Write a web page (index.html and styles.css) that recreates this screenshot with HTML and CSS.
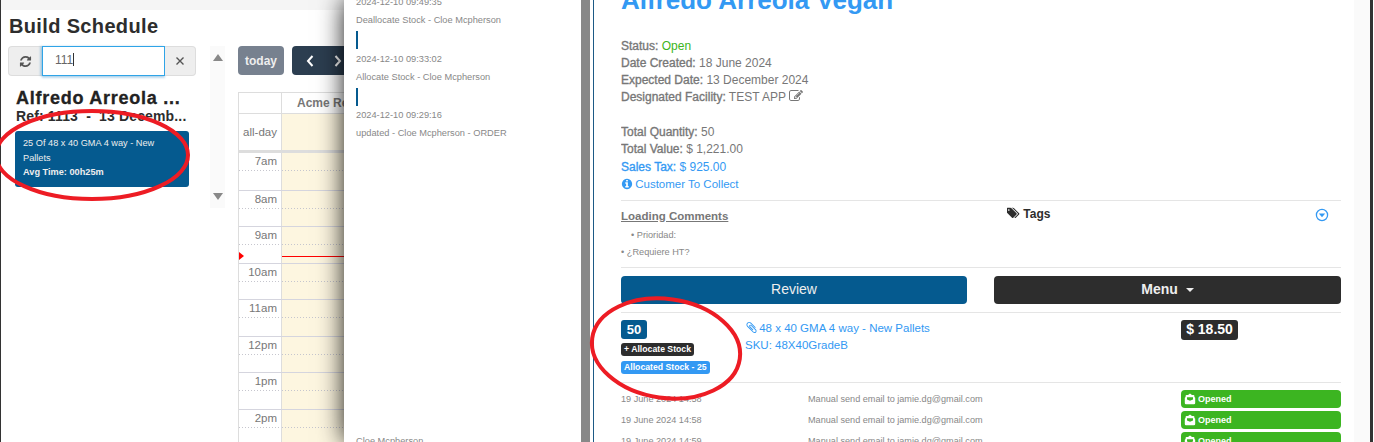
FILE: index.html
```html
<!DOCTYPE html>
<html lang="en">
<head>
  <meta charset="UTF-8">
  <title>Build Schedule</title>
  <link rel="stylesheet" href="styles.css">
</head>
<body>
  <div class="schedule-page">
    <div class="top-strip"></div>
    <h1 class="page-title">Build Schedule</h1>
    <div class="schedule-body">
      <aside class="sidebar">
        <div class="search-group">
          <button class="search-btn refresh-btn">
            <svg class="icon-refresh" viewBox="0 0 1792 1792"><path d="M1639 1056q0 5-1 7-64 268-268 434.5t-478 166.5q-146 0-282.5-55t-243.5-157l-129 129q-19 19-45 19t-45-19-19-45v-448q0-26 19-45t45-19h448q26 0 45 19t19 45-19 45l-137 137q71 66 161 102t187 36q134 0 250-65t186-179q11-17 53-117 8-23 30-23h192q13 0 22.5 9.5t9.5 22.5zm25-800v448q0 26-19 45t-45 19h-448q-26 0-45-19t-19-45 19-45l138-138q-148-137-349-137-134 0-250 65t-186 179q-11 17-53 117-8 23-30 23h-199q-13 0-22.5-9.5t-9.5-22.5v-7q65-268 270-434.5t480-166.5q146 0 284 55.5t245 156.5l130-129q19-19 45-19t45 19 19 45z"/></svg>
          </button>
          <div class="search-input">111<span class="caret-bar"></span></div>
          <button class="search-btn clear-btn">
            <svg class="icon-times" viewBox="0 0 10 10"><path d="M1.5 1.5l7 7M8.5 1.5l-7 7"/></svg>
          </button>
        </div>
        <div class="order-name">Alfredo Arreola ...</div>
        <div class="order-ref">Ref: 1113 &nbsp;-&nbsp; 13 Decemb...</div>
        <div class="build-card">
          <div>25 Of 48 x 40 GMA 4 way - New Pallets</div>
          <div class="build-time">Avg Time: 00h25m</div>
        </div>
      </aside>
      <div class="scroll-col">
        <span class="arrow-up"></span>
        <span class="arrow-down"></span>
      </div>
      <section class="calendar">
        <div class="cal-toolbar">
          <button class="today-btn">today</button>
          <div class="nav-btns">
            <svg class="chevron" viewBox="0 0 10 14"><path d="M7.5 2L3 7l4.5 5"/></svg>
            <svg class="chevron" viewBox="0 0 10 14"><path d="M2.5 2L7 7l-4.5 5"/></svg>
          </div>
        </div>
        <div class="cal-grid">
          <div class="cal-head">
            <div class="axis"></div>
            <div class="resource">Acme Recycling</div>
          </div>
          <div class="cal-allday">
            <div class="axis">all-day</div>
            <div class="day"></div>
          </div>
          <div class="cal-slots">
            <div class="hour"><div class="axis">7am</div><div class="day"></div></div>
            <div class="hour"><div class="axis">8am</div><div class="day"></div></div>
            <div class="hour"><div class="axis">9am</div><div class="day"></div></div>
            <div class="hour"><div class="axis">10am</div><div class="day"></div></div>
            <div class="hour"><div class="axis">11am</div><div class="day"></div></div>
            <div class="hour"><div class="axis">12pm</div><div class="day"></div></div>
            <div class="hour"><div class="axis">1pm</div><div class="day"></div></div>
            <div class="hour"><div class="axis">2pm</div><div class="day"></div></div>
            <span class="now-arrow"></span>
            <span class="now-line"></span>
          </div>
        </div>
      </section>
    </div>
  </div>

  <div class="overlay">
    <div class="history">
      <div class="history-item">
        <div>2024-12-10 09:49:35</div>
        <div>Deallocate Stock - Cloe Mcpherson</div>
        <span class="tick"></span>
      </div>
      <div class="history-item">
        <div>2024-12-10 09:33:02</div>
        <div>Allocate Stock - Cloe Mcpherson</div>
        <span class="tick"></span>
      </div>
      <div class="history-item">
        <div>2024-12-10 09:29:16</div>
        <div>updated - Cloe Mcpherson - ORDER</div>
      </div>
      <div class="history-foot">Cloe Mcpherson</div>
    </div>
    <div class="grey-strip"></div>

    <div class="order-panel">
      <div class="order-content">
        <h2 class="customer">Alfredo Arreola Vegan</h2>
        <div class="info-block">
          <div><b>Status:</b> <span class="green">Open</span></div>
          <div><b>Date Created:</b> 18 June 2024</div>
          <div><b>Expected Date:</b> 13 December 2024</div>
          <div><b>Designated Facility:</b> TEST APP
            <svg class="icon-edit" viewBox="0 0 1792 1792"><path d="M888 1184l116-116-152-152-116 116v56h96v96h56zm440-720q-16-16-33 1l-350 350q-17 17-1 33t33-1l350-350q17-17 1-33zm80 594v190q0 119-84.5 203.5t-203.5 84.5h-832q-119 0-203.5-84.5t-84.5-203.5v-832q0-119 84.5-203.5t203.5-84.5h832q63 0 117 25 15 7 18 23 3 17-9 29l-49 49q-14 14-32 8-23-6-45-6h-832q-66 0-113 47t-47 113v832q0 66 47 113t113 47h832q66 0 113-47t47-113v-126q0-13 9-22l64-64q15-15 35-7t20 29zm-96-738l288 288-672 672h-288v-288zm444 132l-92 92-288-288 92-92q28-28 68-28t68 28l152 152q28 28 28 68t-28 68z"/></svg>
          </div>
        </div>
        <div class="info-block totals">
          <div><b>Total Quantity:</b> 50</div>
          <div><b>Total Value:</b> $ 1,221.00</div>
          <div class="blue sales-tax"><b>Sales Tax:</b> $ 925.00</div>
          <div class="blue collect">
            <svg class="icon-info" viewBox="0 0 1792 1792"><path d="M1152 1376v-160q0-14-9-23t-23-9h-96v-512q0-14-9-23t-23-9h-320q-14 0-23 9t-9 23v160q0 14 9 23t23 9h96v320h-96q-14 0-23 9t-9 23v160q0 14 9 23t23 9h448q14 0 23-9t9-23zm-128-896v-160q0-14-9-23t-23-9h-192q-14 0-23 9t-9 23v160q0 14 9 23t23 9h192q14 0 23-9t9-23zm640 416q0 209-103 385.5t-279.5 279.5-385.5 103-385.5-103-279.5-279.5-103-385.5 103-385.5 279.5-279.5 385.5-103 385.5 103 279.5 279.5 103 385.5z"/></svg>
            Customer To Collect
          </div>
        </div>

        <div class="comments-row">
          <div class="comments">
            <div class="comments-title">Loading Comments</div>
            <div class="comment-line indent">&bull; Prioridad:</div>
            <div class="comment-line">&bull; ¿Requiere HT?</div>
          </div>
          <div class="tags">
            <svg class="icon-tags" viewBox="0 0 1920 1792"><path d="M384 448q0-53-37.5-90.5t-90.5-37.5-90.5 37.5-37.5 90.5 37.5 90.5 90.5 37.5 90.5-37.5 37.5-90.5zm1067 576q0 53-37 90l-491 492q-39 37-91 37-53 0-90-37l-715-716q-38-37-64.5-101t-26.5-117v-416q0-52 38-90t90-38h416q53 0 117 26.5t102 64.5l715 714q37 39 37 91zm384 0q0 53-37 90l-491 492q-39 37-91 37-36 0-59-14t-53-45l470-470q37-37 37-90 0-52-37-91l-715-714q-38-38-102-64.5t-117-26.5h224q53 0 117 26.5t102 64.5l715 714q37 39 37 91z"/></svg>
            Tags
          </div>
          <svg class="icon-collapse" viewBox="0 0 14 14"><circle cx="7" cy="7" r="5.6"/><path class="fill" d="M3.8 5.6h6.4L7 9.2z"/></svg>
        </div>

        <div class="action-row">
          <button class="action-btn review">Review</button>
          <button class="action-btn menu">Menu <span class="menu-caret"></span></button>
        </div>

        <div class="item-row">
          <div class="item-qty">
            <span class="qty-badge">50</span>
            <span class="mini-badge dark">+ Allocate Stock</span>
            <span class="mini-badge light">Allocated Stock - 25</span>
          </div>
          <div class="item-name">
            <div>
              <svg class="icon-clip" viewBox="0 0 1792 1792"><path d="M1596 1385q0 117-79 196t-196 79q-135 0-235-100l-777-776q-113-115-113-271 0-159 110-270t269-111q158 0 273 113l605 606q10 10 10 22 0 16-30.5 46.5t-46.5 30.5q-13 0-23-10l-606-607q-79-77-181-77-106 0-179 75t-73 181q0 105 76 181l776 777q63 63 145 63 64 0 106-42t42-106q0-82-63-145l-581-581q-26-24-60-24-29 0-48 19t-19 48q0 32 25 59l410 410q10 10 10 22 0 16-31 47t-47 31q-12 0-22-10l-410-410q-63-61-63-149 0-82 57-139t139-57q88 0 149 63l581 581q100 98 100 235z"/></svg>
              48 x 40 GMA 4 way - New Pallets
            </div>
            <div>SKU: 48X40GradeB</div>
          </div>
          <div><span class="price">$ 18.50</span></div>
        </div>

        <div class="log-row">
          <div>19 June 2024 14:58</div>
          <div>Manual send email to jamie.dg@gmail.com</div>
          <div class="opened"><svg class="icon-open" viewBox="0 0 12 12"><path d="M6 .6l2 1.4h1.400q1 0 1 1V4l.8.7V10q0 1.200-1.200 1.200H2q-1.200 0-1.200-1.200V4.700L1.600 4V3q0-1 1-1H4zM3 4.200v2.200L6 7.800l3-1.400V4.200z"/></svg>Opened</div>
        </div>
        <div class="log-row">
          <div>19 June 2024 14:58</div>
          <div>Manual send email to jamie.dg@gmail.com</div>
          <div class="opened"><svg class="icon-open" viewBox="0 0 12 12"><path d="M6 .6l2 1.4h1.400q1 0 1 1V4l.8.7V10q0 1.200-1.200 1.200H2q-1.200 0-1.200-1.200V4.700L1.600 4V3q0-1 1-1H4zM3 4.200v2.200L6 7.800l3-1.400V4.200z"/></svg>Opened</div>
        </div>
        <div class="log-row">
          <div>19 June 2024 14:59</div>
          <div>Manual send email to jamie.dg@gmail.com</div>
          <div class="opened"><svg class="icon-open" viewBox="0 0 12 12"><path d="M6 .6l2 1.4h1.400q1 0 1 1V4l.8.7V10q0 1.200-1.200 1.200H2q-1.200 0-1.200-1.200V4.700L1.600 4V3q0-1 1-1H4zM3 4.200v2.200L6 7.800l3-1.400V4.200z"/></svg>Opened</div>
        </div>
      </div>
      <div class="panel-margin"></div>
    </div>
    <div class="window-edge"></div>
  </div>

  <!-- red rings someone drew on the screenshot -->
  <svg class="markup" viewBox="0 0 1374 442">
    <ellipse cx="92" cy="155" rx="96" ry="44"/>
    <ellipse cx="666" cy="348.500" rx="74.500" ry="49.500" transform="rotate(8 666 348.500)"/>
  </svg>
</body>
</html>
```

FILE: styles.css
```css
* {
  box-sizing: border-box;
}

html,
body {
  margin: 0;
  height: 442px;
  overflow: hidden;
}

body {
  font-family: 'Liberation Sans', Arial, sans-serif;
  font-size: 12px;
  color: #777;
  background: #fff;
}

button {
  font-family: inherit;
  border: none;
  padding: 0;
}

/* schedule page underneath */
.schedule-page {
  height: 442px;
  border-left: 1px solid #333;
}

.top-strip {
  height: 10px;
  background: #f5f5f5;
}

.page-title {
  margin: 4px 0 0 8px;
  font-size: 20px;
  line-height: 24px;
  font-weight: 700;
  color: #2d2d2d;
  letter-spacing: 0.35px;
}

.schedule-body {
  display: flex;
  margin-top: 8px;
  padding-left: 7px;
}

.sidebar {
  width: 188px;
}

.search-group {
  display: flex;
  height: 30px;
}

.search-btn {
  display: flex;
  align-items: center;
  justify-content: center;
  background: #eee;
  border: 1px solid #ddd;
}

.refresh-btn {
  width: 34px;
  border-radius: 4px 0 0 4px;
  border-right: none;
}

.clear-btn {
  width: 31px;
  border-radius: 0 4px 4px 0;
  border-left: none;
}

.icon-refresh {
  width: 13px;
  height: 13px;
  fill: #555;
}

.icon-times {
  width: 10px;
  height: 10px;
  fill: none;
  stroke: #555;
  stroke-width: 1.4;
}

.search-input {
  width: 123px;
  padding: 0 0 0 12px;
  line-height: 27px;
  background: #fff;
  border: 1px solid #2fa4e7;
  box-shadow: 0 2px 2px rgba(47, 140, 200, 0.3), -2px 0 2px rgba(47, 140, 200, 0.3);
  color: #666;
}

.caret-bar {
  display: inline-block;
  width: 1px;
  height: 13px;
  background: #333;
  vertical-align: -2px;
}

.order-name {
  margin: 13px 0 0 8px;
  font-size: 18px;
  line-height: 19px;
  font-weight: 700;
  color: #222;
  letter-spacing: 0.75px;
  -webkit-text-stroke: 0.3px #222;
  white-space: nowrap;
}

.order-ref {
  margin: 1px 0 0 8px;
  font-size: 14px;
  line-height: 15px;
  font-weight: 700;
  color: #2d2d2d;
  letter-spacing: 0.15px;
  white-space: nowrap;
}

.build-card {
  width: 174px;
  height: 56px;
  margin: 7px 0 0 7px;
  padding: 5px 8px 0;
  background: #055a8f;
  border-radius: 3px;
  font-size: 9.2px;
  line-height: 14.5px;
  color: #eee;
}

.build-time {
  font-weight: 700;
}

.scroll-col {
  position: relative;
  width: 15px;
  height: 162px;
  margin-left: 14px;
  background: #fafafa;
}

.arrow-up,
.arrow-down {
  display: block;
  margin: 0 auto;
  width: 0;
  border-left: 5px solid transparent;
  border-right: 5px solid transparent;
}

.arrow-up {
  margin-top: 8px;
  border-bottom: 7px solid #888;
}

.arrow-down {
  margin-top: 132px;
  border-top: 7px solid #888;
}

.calendar {
  margin-left: 13px;
  width: 260px;
}

.cal-toolbar {
  display: flex;
  gap: 8px;
  height: 29px;
}

.today-btn {
  width: 46px;
  border-radius: 4px;
  background: #77818f;
  color: #eee;
  font-size: 12px;
  font-weight: 700;
}

.nav-btns {
  display: flex;
  align-items: center;
  gap: 18px;
  width: 100px;
  padding-left: 13px;
  border-radius: 4px;
  background: #2c3e50;
}

.chevron {
  width: 10px;
  height: 14px;
  fill: none;
  stroke: #fff;
  stroke-width: 2;
}

.cal-grid {
  margin-top: 17px;
  border-left: 1px solid #ddd;
  border-top: 1px solid #ddd;
}

.axis {
  width: 43px;
  flex: none;
  border-right: 1px solid #ddd;
  padding-right: 4px;
  text-align: right;
  font-size: 11.5px;
}

.cal-head {
  display: flex;
  height: 21px;
  border-bottom: 1px solid #ddd;
}

.resource {
  flex: 1;
  padding-left: 15px;
  line-height: 20px;
  font-weight: 700;
  color: #777;
  white-space: nowrap;
  overflow: hidden;
}

.cal-allday {
  display: flex;
  height: 36px;
  line-height: 36px;
}

.day {
  flex: 1;
  background: #fdf6e0;
}

.cal-slots {
  position: relative;
  border-top: 3px solid #ddd;
}

.hour {
  display: flex;
  height: 36.5px;
  line-height: 17px;
  border-top: 1px solid #d5d5de;
}

.hour:first-child {
  border-top: none;
}

.hour .axis,
.hour .day {
  background-image: linear-gradient(to right, #c6c6ce 50%, transparent 50%);
  background-size: 3px 1px;
  background-position: 0 17px;
  background-repeat: repeat-x;
}

.hour .day {
  background-color: #fdf6e0;
}

.now-line {
  position: absolute;
  left: 43px;
  right: 0;
  top: 103px;
  height: 1px;
  background: #f00;
}

.now-arrow {
  position: absolute;
  left: 0;
  top: 99px;
  border-left: 5px solid #f00;
  border-top: 4px solid transparent;
  border-bottom: 4px solid transparent;
}

/* panels slid over the page */
.overlay {
  position: absolute;
  top: 0;
  left: 344px;
  right: 0;
  height: 442px;
  display: flex;
  background: #fff;
  box-shadow: 0 0 24px rgba(0, 0, 0, 0.9);
}

.history {
  display: flex;
  flex-direction: column;
  width: 237px;
  padding: 0 0 0 12px;
  font-size: 9.25px;
  color: #888;
  overflow: hidden;
}

.history-item {
  height: 56.5px;
  line-height: 18px;
}

.history-item:first-child {
  margin-top: -7px;
}

.tick {
  display: block;
  width: 2px;
  height: 18px;
  margin-top: 2px;
  background: #055a8f;
}

.history-foot {
  margin-top: auto;
  margin-bottom: -5px;
  line-height: 11px;
}

.grey-strip {
  width: 9px;
  background: #888;
}

.order-panel {
  display: flex;
  flex: 1;
  margin-left: 3px;
  border-left: 1px solid #1d5a86;
  background: #fff;
}

.order-content {
  width: 720px;
  margin-left: 27px;
  overflow: hidden;
}

.panel-margin {
  flex: 1;
  margin-left: 13px;
  background: #fafafa;
}

.window-edge {
  width: 3px;
  margin-right: 1px;
  background: #333;
}

.customer {
  margin: -16px 0 0;
  font-size: 26px;
  line-height: 32px;
  font-weight: 700;
  color: #3399f3;
}

.info-block {
  margin-top: 22px;
  line-height: 17px;
}

.info-block b {
  font-weight: 400;
  -webkit-text-stroke: 0.35px;
}

.totals {
  margin-top: 18px;
  padding-bottom: 8px;
  border-bottom: 1px solid #e5e5e5;
}

.sales-tax {
  margin-top: 1px;
}

.collect {
  font-size: 11.5px;
  line-height: 16px;
}

.green {
  color: #3cb521;
}

.blue {
  color: #3399f3;
}

.icon-edit {
  width: 14px;
  height: 14px;
  fill: #777;
  vertical-align: -2px;
}

.icon-info {
  width: 12px;
  height: 12px;
  margin-right: -1px;
  fill: #3399f3;
  vertical-align: -2px;
}

.comments-row {
  display: flex;
  height: 67px;
  padding-top: 8px;
  border-bottom: 1px solid #e5e5e5;
}

.comments {
  width: 386px;
}

.comments-title {
  font-size: 11.5px;
  font-weight: 700;
  line-height: 15px;
  text-decoration: underline;
}

.comment-line {
  font-size: 9.2px;
  line-height: 17px;
  color: #888;
}

.indent {
  margin-top: 3px;
  padding-left: 10px;
}

.tags {
  width: 308px;
  margin-top: -2px;
  font-weight: 700;
  line-height: 13px;
  color: #2d2d2d;
}

.icon-tags {
  width: 13px;
  height: 12px;
  fill: #2d2d2d;
  vertical-align: -1px;
}

.icon-collapse {
  width: 14px;
  height: 14px;
  margin-top: -1px;
  fill: none;
  stroke: #3399f3;
  stroke-width: 1.3;
}

.icon-collapse .fill {
  fill: #3399f3;
  stroke: none;
}

.action-row {
  display: grid;
  grid-template-columns: 346px 347px;
  gap: 27px;
  padding: 8px 0;
  border-bottom: 1px solid #e5e5e5;
}

.action-btn {
  height: 28px;
  padding-bottom: 2px;
  border-radius: 4px;
  font-size: 14px;
  color: #eee;
}

.review {
  background: #055a8f;
}

.menu {
  background: #2d2d2d;
  font-weight: 700;
}

.menu-caret {
  display: inline-block;
  margin-left: 4px;
  vertical-align: 2px;
  border-top: 4px solid #eee;
  border-left: 4px solid transparent;
  border-right: 4px solid transparent;
}

.item-row {
  display: grid;
  grid-template-columns: 124px 436px 1fr;
  height: 70px;
  padding-top: 7px;
  border-bottom: 1px solid #e5e5e5;
}

.item-qty {
  display: flex;
  flex-direction: column;
  align-items: flex-start;
}

.qty-badge {
  width: 26px;
  height: 19px;
  border-radius: 3px;
  background: #055a8f;
  color: #fff;
  font-size: 13px;
  font-weight: 700;
  line-height: 19px;
  text-align: center;
}

.mini-badge {
  height: 13px;
  padding: 0 3px;
  border-radius: 3px;
  color: #fff;
  font-size: 8.7px;
  font-weight: 700;
  line-height: 13px;
}

.dark {
  margin-top: 4px;
  background: #2d2d2d;
}

.light {
  margin-top: 5px;
  background: #3399f3;
}

.item-name {
  font-size: 11.5px;
  line-height: 17px;
  color: #3399f3;
}

.icon-clip {
  width: 13px;
  height: 13px;
  margin-right: -2px;
  fill: #3399f3;
  vertical-align: -2px;
}

.price {
  display: inline-block;
  width: 57px;
  height: 20px;
  border-radius: 3px;
  background: #2d2d2d;
  color: #fff;
  font-size: 14px;
  font-weight: 700;
  line-height: 19px;
  text-align: center;
}

.log-row {
  display: grid;
  grid-template-columns: 187px 373px 160px;
  align-items: center;
  height: 18px;
  margin-bottom: 3px;
  font-size: 9.15px;
  color: #888;
}

.item-row + .log-row {
  margin-top: 7px;
}

.opened {
  display: flex;
  align-items: center;
  gap: 2px;
  height: 18px;
  padding-left: 3px;
  border-radius: 4px;
  background: #3cb521;
  color: #fff;
  font-size: 9px;
  font-weight: 700;
}

.icon-open {
  width: 12px;
  height: 12px;
  fill: #fff;
}

.markup {
  position: absolute;
  top: 0;
  left: 0;
  width: 1374px;
  height: 442px;
  fill: none;
  stroke: #ed1c24;
  stroke-width: 4;
  pointer-events: none;
}
```
